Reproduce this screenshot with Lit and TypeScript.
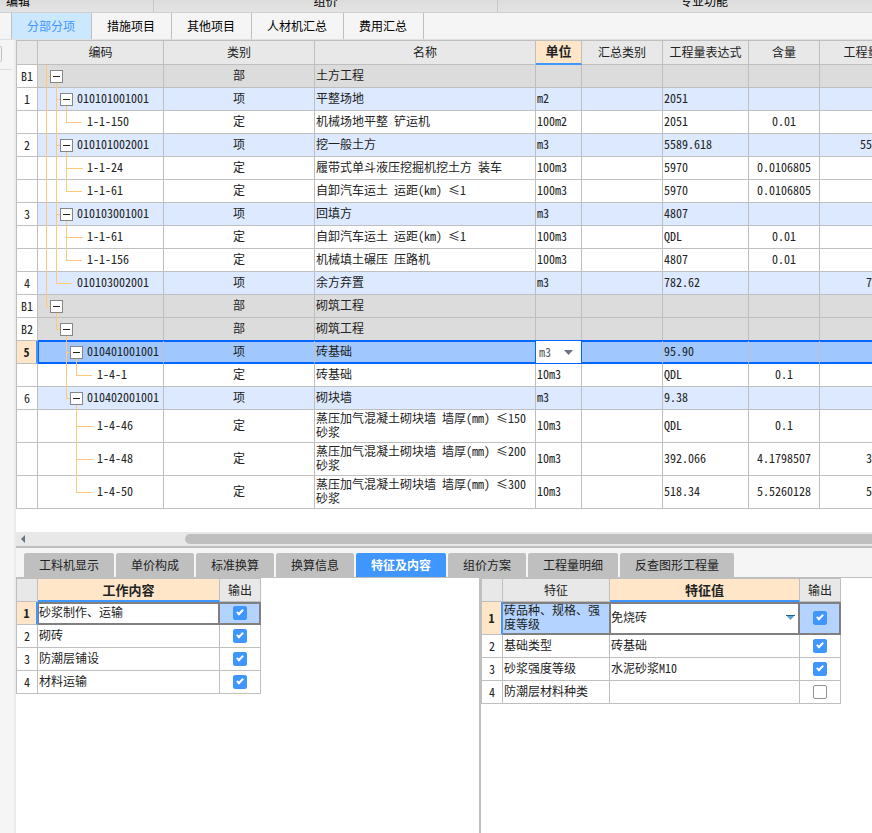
import { LitElement, html, css, svg, nothing } from "lit";
import { customElement, property } from "lit/decorators.js";
import { classMap } from "lit/directives/class-map.js";

interface BillRow {
  no: string;
  // One character per tree level: "|" line passes, "." empty, "T"/"L" connector, "+" expandable node.
  tree: string;
  code: string;
  kind: "部" | "项" | "定";
  name: string;
  unit: string;
  expr: string;
  ratio?: string;
  qty?: string;
  tall?: boolean;
  selected?: boolean;
}

const BILL: BillRow[] = [
  { no: "B1", tree: "T+", code: "", kind: "部", name: "土方工程", unit: "", expr: "" },
  { no: "1", tree: "|T+", code: "010101001001", kind: "项", name: "平整场地", unit: "m2", expr: "2051" },
  { no: "", tree: "||L", code: "1-1-150", kind: "定", name: "机械场地平整 铲运机", unit: "100m2", expr: "2051", ratio: "0.01" },
  { no: "2", tree: "|T+", code: "010101002001", kind: "项", name: "挖一般土方", unit: "m3", expr: "5589.618", qty: "5589.62" },
  { no: "", tree: "||T", code: "1-1-24", kind: "定", name: "履带式单斗液压挖掘机挖土方 装车", unit: "100m3", expr: "5970", ratio: "0.0106805" },
  { no: "", tree: "||L", code: "1-1-61", kind: "定", name: "自卸汽车运土 运距(km) ≤1", unit: "100m3", expr: "5970", ratio: "0.0106805" },
  { no: "3", tree: "|T+", code: "010103001001", kind: "项", name: "回填方", unit: "m3", expr: "4807" },
  { no: "", tree: "||T", code: "1-1-61", kind: "定", name: "自卸汽车运土 运距(km) ≤1", unit: "100m3", expr: "QDL", ratio: "0.01" },
  { no: "", tree: "||L", code: "1-1-156", kind: "定", name: "机械填土碾压 压路机", unit: "100m3", expr: "4807", ratio: "0.01" },
  { no: "4", tree: "|L", code: "010103002001", kind: "项", name: "余方弃置", unit: "m3", expr: "782.62", qty: "782.62" },
  { no: "B1", tree: "L+", code: "", kind: "部", name: "砌筑工程", unit: "", expr: "" },
  { no: "B2", tree: ".L+", code: "", kind: "部", name: "砌筑工程", unit: "", expr: "" },
  { no: "5", tree: "..T+", code: "010401001001", kind: "项", name: "砖基础", unit: "m3", expr: "95.90", selected: true },
  { no: "", tree: "..|L", code: "1-4-1", kind: "定", name: "砖基础", unit: "10m3", expr: "QDL", ratio: "0.1" },
  { no: "6", tree: "..L+", code: "010402001001", kind: "项", name: "砌块墙", unit: "m3", expr: "9.38" },
  { no: "", tree: "...T", code: "1-4-46", kind: "定", name: "蒸压加气混凝土砌块墙 墙厚(mm) ≤150 砂浆", unit: "10m3", expr: "QDL", ratio: "0.1", tall: true },
  { no: "", tree: "...T", code: "1-4-48", kind: "定", name: "蒸压加气混凝土砌块墙 墙厚(mm) ≤200 砂浆", unit: "10m3", expr: "392.066", ratio: "4.1798507", qty: "392.07", tall: true },
  { no: "", tree: "...L", code: "1-4-50", kind: "定", name: "蒸压加气混凝土砌块墙 墙厚(mm) ≤300 砂浆", unit: "10m3", expr: "518.34", ratio: "5.5260128", qty: "518.34", tall: true },
];

const MAIN_TABS = ["分部分项", "措施项目", "其他项目", "人材机汇总", "费用汇总"];
const DETAIL_TABS = ["工料机显示", "单价构成", "标准换算", "换算信息", "特征及内容", "组价方案", "工程量明细", "反查图形工程量"];
const WORKS = ["砂浆制作、运输", "砌砖", "防潮层铺设", "材料运输"];
const FEATURES = [
  { name: "砖品种、规格、强度等级", value: "免烧砖", out: true },
  { name: "基础类型", value: "砖基础", out: true },
  { name: "砂浆强度等级", value: "水泥砂浆M10", out: true },
  { name: "防潮层材料种类", value: "", out: false },
];

const KIND_CLASS = { 部: "part", 项: "item", 定: "quota" };

const base = css`
  * {
    box-sizing: border-box;
  }
  button,
  select,
  input {
    font: inherit;
    font-feature-settings: inherit;
    color: inherit;
    margin: 0;
    padding: 0;
    border: 0;
    background: none;
    border-radius: 0;
    appearance: none;
  }
  table {
    border-collapse: separate;
    border-spacing: 0;
    table-layout: fixed;
    border-top: 1px solid #bfbfbf;
    border-left: 1px solid #bfbfbf;
  }
  th,
  td {
    padding: 0 1px;
    border-right: 1px solid #bfbfbf;
    border-bottom: 1px solid #bfbfbf;
    line-height: 14px;
    font-weight: 400;
    text-align: left;
    vertical-align: middle;
  }
  td {
    padding-bottom: 2px;
  }
  th {
    background: #e8e8e8;
    text-align: center;
  }
  .center,
  .no {
    text-align: center;
  }
  .no {
    background: #fff;
  }
  .key {
    background: #ffe6c8;
    font-size: 13px;
    font-weight: 700;
    border-bottom: 2px solid #4096ff;
  }
  .current {
    background: #ffe6c8;
    font-weight: 700;
    border-right: 2px solid #4096ff;
  }
  .pick {
    position: relative;
    display: block;
  }
  .pick select {
    display: block;
    width: 100%;
  }
  .pick svg {
    position: absolute;
    top: 50%;
    right: 8px;
    margin-top: -2px;
    pointer-events: none;
  }
`;

@customElement("bill-grid")
export class BillGrid extends LitElement {
  static styles = [
    base,
    css`
      :host {
        display: block;
        overflow: hidden;
        padding-bottom: 23px;
        background: #fff;
      }
      table {
        width: 888px;
      }
      thead tr {
        height: 24px;
      }
      thead th {
        padding-bottom: 2px;
      }
      tbody tr {
        height: 23px;
      }
      tbody tr.tall {
        height: 33px;
      }
      .part td {
        background: #dcdcdc;
      }
      .item td {
        background: #dce9ff;
      }
      .selected td {
        background: #a0c8ff;
        border-bottom-color: #0066ff;
        box-shadow: 0 -1px 0 #0066ff, inset 0 1px 0 #0066ff, inset 0 -1px 0 #0066ff;
      }
      .selected td.code {
        box-shadow: 0 -1px 0 #0066ff, inset 1px 1px 0 #0066ff, inset 0 -1px 0 #0066ff;
      }
      .selected td.unit {
        padding: 0;
        background: #fff;
        border-right-color: #0066ff;
        box-shadow: 0 -1px 0 #0066ff, -1px 0 0 #0066ff;
      }
      td.code {
        padding: 0;
      }
      .tree {
        display: flex;
        align-items: center;
        height: 23px;
        margin-bottom: -1px;
        padding-left: 8px;
      }
      .tall .tree {
        height: 33px;
      }
      .label {
        padding-bottom: 3px;
      }
      .slot {
        width: 10px;
        height: 100%;
      }
      .pass,
      .through {
        border-left: 1px solid #ffc87d;
      }
      .joint {
        position: relative;
        display: flex;
        align-items: center;
        width: 17px;
        height: 100%;
        padding-left: 4px;
        margin-right: 4px;
      }
      .joint.through {
        padding-left: 3px;
      }
      .joint::before {
        content: "";
        position: absolute;
        left: 0;
        top: 0;
        width: 16px;
        height: 50%;
        border: solid #ffc87d;
        border-width: 0 0 1px 1px;
        box-sizing: border-box;
      }
      .joint.through::before {
        border-left: 0;
      }
      .joint.node::before {
        width: 6px;
      }
      .joint.node::after {
        content: "";
        position: absolute;
        right: 6px;
        bottom: 0;
        width: 1px;
        height: 5px;
        background: #ffc87d;
      }
      .toggle {
        position: relative;
        display: block;
        flex: none;
        width: 13px;
        height: 13px;
        border: 1px solid #868686;
        background: linear-gradient(#222, #222) 50% 50% / 7px 1px no-repeat #fff;
      }
      .qty {
        text-align: right;
      }
      .pick select {
        height: 22px;
        padding-left: 3px;
        color: #555;
      }
    `,
  ];

  private renderTree(row: BillRow) {
    const levels = row.tree.replace("+", "").split("");
    const joint = levels.pop();
    const node = row.tree.endsWith("+");
    return html`<div class="tree">
      ${levels.map((l) => html`<span class="slot ${l === "|" ? "pass" : ""}"></span>`)}
      <span class=${classMap({ joint: true, through: joint === "T", node })}>
        ${node ? html`<button class="toggle" aria-label="折叠"></button>` : nothing}
      </span>
      <span class="label">${row.code}</span>
    </div>`;
  }

  render() {
    return html`<table>
      <colgroup>
        <col style="width:21px" /><col style="width:126px" /><col style="width:151px" />
        <col style="width:221px" /><col style="width:46px" /><col style="width:81px" />
        <col style="width:86px" /><col style="width:71px" /><col style="width:84px" />
      </colgroup>
      <thead>
        <tr>
          <th></th><th>编码</th><th>类别</th><th>名称</th><th class="key">单位</th>
          <th>汇总类别</th><th>工程量表达式</th><th>含量</th><th>工程量</th>
        </tr>
      </thead>
      <tbody>
        ${BILL.map(
          (r) => html`<tr class=${classMap({ [KIND_CLASS[r.kind]]: true, tall: !!r.tall, selected: !!r.selected })}>
            <th class="no ${r.selected ? "current" : ""}" scope="row">${r.no}</th>
            <td class="code">${this.renderTree(r)}</td>
            <td class="center">${r.kind}</td>
            <td>${r.name}</td>
            <td class="unit">
              ${r.selected
                ? html`<span class="pick">
                    <select aria-label="单位"><option>${r.unit}</option></select>
                    <svg width="9" height="5">${svg`<path d="M0 0h9L4.500 5z" fill="#6b7280"/>`}</svg>
                  </span>`
                : r.unit}
            </td>
            <td></td>
            <td>${r.expr}</td>
            <td class="center">${r.ratio ?? ""}</td>
            <td class="qty">${r.qty ?? ""}</td>
          </tr>`
        )}
      </tbody>
    </table>`;
  }
}

@customElement("detail-grid")
export class DetailGrid extends LitElement {
  @property() kind: "works" | "features" = "works";

  static styles = [
    base,
    css`
      :host {
        display: block;
      }
      .works {
        width: 245px;
      }
      .features {
        width: 360px;
      }
      tr {
        height: 23px;
      }
      tr.high {
        height: 33px;
      }
      .active td {
        border-color: #808080;
        box-shadow: inset 0 2px 0 #808080, inset 0 -1px 0 #808080;
      }
      .active td.edit {
        border-right-color: #808080;
        box-shadow: inset 1px 2px 0 #808080, inset -1px -1px 0 #808080;
      }
      .active td.tint {
        background: #b4d4ff;
      }
      .active td.out {
        box-shadow: inset 0 2px 0 #808080, inset -1px -1px 0 #808080;
      }
      td.out {
        padding-bottom: 0;
      }
      .pick select {
        height: 26px;
      }
      .pick svg {
        right: 3px;
      }
      .check {
        display: block;
        position: relative;
        width: 14px;
        height: 14px;
        margin: 0 auto;
        border: 1px solid #909090;
        border-radius: 2px;
        background: #fff;
      }
      .check:checked {
        border-color: #4096ff;
        background: #4096ff;
      }
      .check:checked::after {
        content: "";
        position: absolute;
        left: 4px;
        top: 1px;
        width: 2px;
        height: 5px;
        border: solid #fff;
        border-width: 0 2px 2px 0;
        transform: rotate(45deg);
      }
    `,
  ];

  private check(on: boolean, label: string) {
    return html`<input class="check" type="checkbox" aria-label="输出 ${label}" .checked=${on} />`;
  }

  private works() {
    return html`<table class="works">
      <colgroup><col style="width:21px" /><col style="width:182px" /><col style="width:41px" /></colgroup>
      <thead>
        <tr><th></th><th class="key">工作内容</th><th>输出</th></tr>
      </thead>
      <tbody>
        ${WORKS.map(
          (w, i) => html`<tr class=${i === 0 ? "active" : ""}>
            <th class="no ${i === 0 ? "current" : ""}" scope="row">${i + 1}</th>
            <td class="edit">${w}</td>
            <td class="out tint">${this.check(true, w)}</td>
          </tr>`
        )}
      </tbody>
    </table>`;
  }

  private features() {
    return html`<table class="features">
      <colgroup>
        <col style="width:21px" /><col style="width:107px" /><col style="width:190px" /><col style="width:41px" />
      </colgroup>
      <thead>
        <tr><th></th><th>特征</th><th class="key">特征值</th><th>输出</th></tr>
      </thead>
      <tbody>
        ${FEATURES.map(
          (f, i) => html`<tr class=${i === 0 ? "active high" : ""}>
            <th class="no ${i === 0 ? "current" : ""}" scope="row">${i + 1}</th>
            <td class="tint">${f.name}</td>
            <td class="edit">
              ${i === 0
                ? html`<span class="pick">
                    <select aria-label=${f.name}><option>${f.value}</option></select>
                    <svg width="9" height="5">${svg`<path d="M0 0h9L4.500 5z" fill="#5aa0d0"/><path d="M0 0h9v1H0z" fill="#1f5f96"/>`}</svg>
                  </span>`
                : f.value}
            </td>
            <td class="out tint">${this.check(f.out, f.name)}</td>
          </tr>`
        )}
      </tbody>
    </table>`;
  }

  render() {
    return this.kind === "works" ? this.works() : this.features();
  }
}

@customElement("app-root")
export class AppRoot extends LitElement {
  static styles = [
    base,
    css`
      :host {
        display: flex;
        flex-direction: column;
        min-height: 100vh;
        overflow: hidden;
        background: #f5f5f5;
        color: #222;
        font: 12px/14px "Noto Sans CJK SC", sans-serif;
        font-feature-settings: "hwid";
      }
      .ribbon {
        display: flex;
        height: 13px;
        overflow: hidden;
        background: linear-gradient(#dcdcdc, #e4e4e4);
        border-bottom: 1px solid #cfcfcf;
        color: #000;
      }
      .group {
        display: flex;
        flex: none;
        align-items: flex-end;
        justify-content: center;
        width: 344px;
        padding-bottom: 4px;
        border-right: 1px solid #c8c8c8;
      }
      .group.first {
        width: 154px;
        justify-content: flex-start;
        padding-left: 6px;
      }
      .group.last {
        width: 412px;
        border: 0;
      }
      .tabs {
        display: flex;
        height: 27px;
        padding-left: 11px;
        border-bottom: 1px solid #e0e0e0;
      }
      .tab {
        padding: 0 16px 0 15px;
        border-right: 1px solid #bfbfbf;
        color: #000;
      }
      .tab.on {
        background: #cce8ff;
        color: #4096ff;
        border-left: 1px solid #bfbfbf;
      }
      .body {
        display: flex;
        flex: 1;
      }
      .rail {
        flex: none;
        width: 16px;
        border-right: 2px solid #ebebeb;
        padding-top: 6px;
      }
      .handle {
        width: 2px;
        height: 16px;
        border: 1px solid #bfbfbf;
        border-left: 0;
        border-radius: 0 2px 2px 0;
      }
      .rule {
        width: 12px;
        height: 8px;
        border-bottom: 1px solid #dcdcdc;
      }
      .main {
        display: flex;
        flex-direction: column;
        flex: 1;
        min-width: 0;
      }
      .scroll {
        display: flex;
        align-items: center;
        height: 16px;
        padding-left: 5px;
        background: #e8e8e8;
        border-bottom: 2px solid #bfbfbf;
      }
      .thumb {
        flex: 1;
        height: 10px;
        margin-left: 160px;
        border-radius: 5px 0 0 5px;
        background: #bfbfbf;
      }
      .details {
        display: flex;
        gap: 2px;
        height: 30px;
        padding: 5px 0 0 8px;
        border-bottom: 1px solid #bfbfbf;
      }
      .detail {
        padding: 0 15px;
        border-radius: 2px 2px 0 0;
        background: #bfbfbf;
      }
      .detail.on {
        background: #4096ff;
        color: #fff;
        font-weight: 700;
      }
      .panels {
        display: flex;
        flex: 1;
        background: #fff;
      }
      .panel {
        flex: none;
        width: 463px;
      }
      .panel.wide {
        flex: 1;
        border-left: 2px solid #bfbfbf;
      }
    `,
  ];

  render() {
    return html`
      <div class="ribbon">
        <div class="group first">编辑</div>
        <div class="group">组价</div>
        <div class="group last">专业功能</div>
      </div>
      <nav class="tabs">
        ${MAIN_TABS.map((t, i) => html`<button class="tab ${i === 0 ? "on" : ""}">${t}</button>`)}
      </nav>
      <div class="body">
        <aside class="rail">
          <div class="handle"></div>
          <div class="rule"></div>
        </aside>
        <main class="main">
          <bill-grid></bill-grid>
          <div class="scroll">
            <svg width="4" height="8"><path d="M4 0v8L0 4z" fill="#6b7280" /></svg>
            <div class="thumb"></div>
          </div>
          <nav class="details">
            ${DETAIL_TABS.map((t, i) => html`<button class="detail ${i === 4 ? "on" : ""}">${t}</button>`)}
          </nav>
          <div class="panels">
            <section class="panel"><detail-grid kind="works"></detail-grid></section>
            <section class="panel wide"><detail-grid kind="features"></detail-grid></section>
          </div>
        </main>
      </div>
    `;
  }
}
